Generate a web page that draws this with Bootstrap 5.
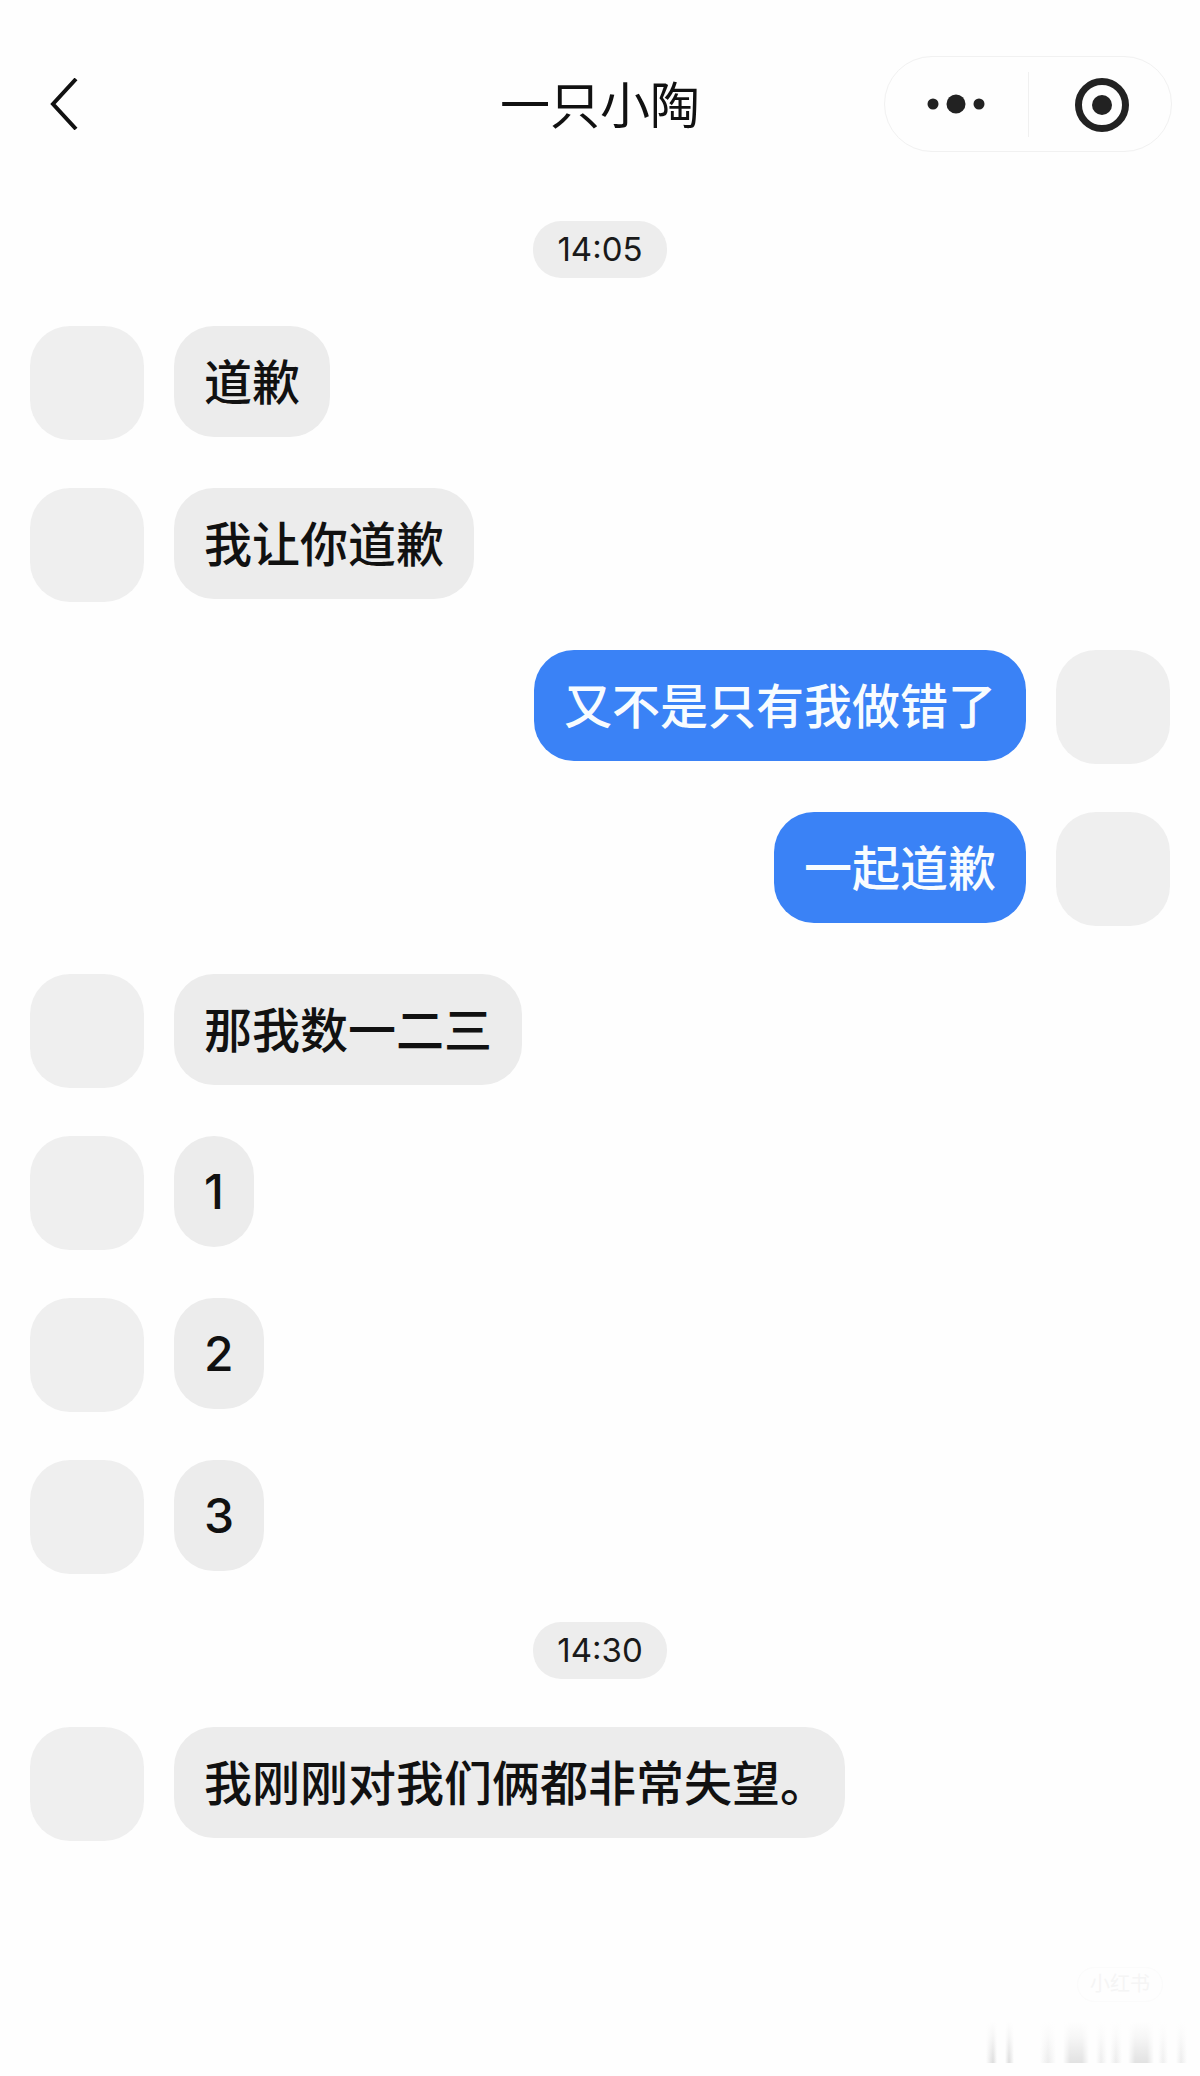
<!DOCTYPE html>
<html lang="zh-CN">
<head>
    <meta charset="UTF-8">
    <meta name="viewport" content="width=device-width, initial-scale=1.0">
    <title>一只小陶</title>
    <link href="https://cdn.jsdelivr.net/npm/bootstrap@5.3.2/dist/css/bootstrap.min.css" rel="stylesheet">
    <style>
        body {
            background: #fefefe;
            color: #111;
            font-family: Inter, "Noto Sans CJK SC", sans-serif;
            height: 2076px;
            overflow: hidden;
        }
        .top-bar {
            display: grid;
            grid-template-columns: 1fr auto 1fr;
            align-items: center;
            padding: 56px 28px 0 28px;
            height: 152px;
        }
        .back-icon { width: 28px; height: 52px; display: block; margin-left: 22px; }
        .bar-title { font-size: 50px; height: 96px; line-height: 100px; font-weight: 400; margin: 0; }
        .capsule {
            width: 288px;
            height: 96px;
            border: 1px solid #f1f1f1;
            border-radius: 48px;
        }
        .capsule-part { width: 50%; height: 100%; }
        .capsule-line { width: 1px; height: 65px; background: #f0f0f0; }
        .target-icon { margin: 1px 0 0 5px; }
        .chat-list { padding: 69px 30px 0 30px; gap: 48px; }
        .time-pill {
            background: #ededed;
            border-radius: 28px;
            color: #1a1a1a;
            font-size: 33px;
            line-height: 57px;
            height: 57px;
            width: 134px;
            text-align: center;
        }
        .msg-row { gap: 30px; }
        .avatar-box {
            width: 114px;
            height: 114px;
            background: #efefef;
            border-radius: 40px;
            flex: none;
        }
        .bubble-box {
            background: #ececec;
            border-radius: 40px;
            font-size: 48px;
            font-weight: 500;
            line-height: 113px;
            height: 111px;
            padding: 0 30px;
            white-space: nowrap;
        }
        .bubble-me { background: #3a82f6; color: #f8fcff; }
        .bubble-num { line-height: 111px; }
        .bubble-end { padding-right: 17px; }
        .faint-tag {
            position: absolute;
            left: 1077px;
            top: 1967px;
            width: 86px;
            height: 35px;
            border: 1px solid #fbfbfb;
            border-radius: 18px;
            color: #f5f5f5;
            font-size: 20px;
            line-height: 33px;
            text-align: center;
        }
        .bottom-smear {
            position: absolute;
            left: 0;
            right: 0;
            top: 2022px;
            height: 41px;
            background:
                linear-gradient(to bottom, #fefefe 0, rgba(254, 254, 254, 0.75) 35%, rgba(254, 254, 254, 0) 100%),
                linear-gradient(90deg, #fefefe 0 986px, #dcdcdc 993px, #fefefe 997px 1005px, #dcdcdc 1009px, #fefefe 1014px 1040px, #ececec 1048px, #fefefe 1056px 1063px, #e2e2e2 1070px 1082px, #fefefe 1089px 1096px, #ededed 1101px, #fefefe 1107px 1110px, #ececec 1116px, #fefefe 1122px 1128px, #e2e2e2 1135px 1147px, #fefefe 1154px 1158px, #efefef 1163px, #fefefe 1168px 1176px, #ececec 1181px, #fefefe 1187px);
        }
    </style>
</head>
<body class="position-relative">
    <div class="top-bar">
        <svg class="back-icon" viewBox="0 0 28 52" fill="none" stroke="#111" stroke-width="4">
            <path d="M26 1 L3 26 L26 51"/>
        </svg>
        <h1 class="bar-title">一只小陶</h1>
        <div class="capsule d-flex align-items-center ms-auto">
            <div class="capsule-part d-flex align-items-center justify-content-center">
                <svg width="58" height="24" viewBox="0 0 58 24" fill="#222">
                    <circle cx="6" cy="12" r="5.5"/>
                    <circle cx="29" cy="12" r="9.5"/>
                    <circle cx="52" cy="12" r="5.5"/>
                </svg>
            </div>
            <div class="capsule-line"></div>
            <div class="capsule-part d-flex align-items-center justify-content-center">
                <svg class="target-icon" width="54" height="54" viewBox="0 0 54 54" fill="none">
                    <circle cx="27" cy="27" r="23.5" stroke="#222" stroke-width="7"/>
                    <circle cx="27" cy="27" r="10" fill="#222"/>
                </svg>
            </div>
        </div>
    </div>

    <div class="chat-list d-flex flex-column">
        <div class="d-flex justify-content-center"><div class="time-pill">14:05</div></div>

        <div class="msg-row d-flex align-items-start">
            <div class="avatar-box"></div>
            <div class="bubble-box">道歉</div>
        </div>
        <div class="msg-row d-flex align-items-start">
            <div class="avatar-box"></div>
            <div class="bubble-box">我让你道歉</div>
        </div>
        <div class="msg-row d-flex align-items-start justify-content-end">
            <div class="bubble-box bubble-me">又不是只有我做错了</div>
            <div class="avatar-box"></div>
        </div>
        <div class="msg-row d-flex align-items-start justify-content-end">
            <div class="bubble-box bubble-me">一起道歉</div>
            <div class="avatar-box"></div>
        </div>
        <div class="msg-row d-flex align-items-start">
            <div class="avatar-box"></div>
            <div class="bubble-box">那我数一二三</div>
        </div>
        <div class="msg-row d-flex align-items-start">
            <div class="avatar-box"></div>
            <div class="bubble-box bubble-num">1</div>
        </div>
        <div class="msg-row d-flex align-items-start">
            <div class="avatar-box"></div>
            <div class="bubble-box bubble-num">2</div>
        </div>
        <div class="msg-row d-flex align-items-start">
            <div class="avatar-box"></div>
            <div class="bubble-box bubble-num">3</div>
        </div>

        <div class="d-flex justify-content-center"><div class="time-pill">14:30</div></div>

        <div class="msg-row d-flex align-items-start">
            <div class="avatar-box"></div>
            <div class="bubble-box bubble-end">我刚刚对我们俩都非常失望。</div>
        </div>
    </div>

    <div class="faint-tag">小红书</div>
    <div class="bottom-smear"></div>
</body>
</html>
